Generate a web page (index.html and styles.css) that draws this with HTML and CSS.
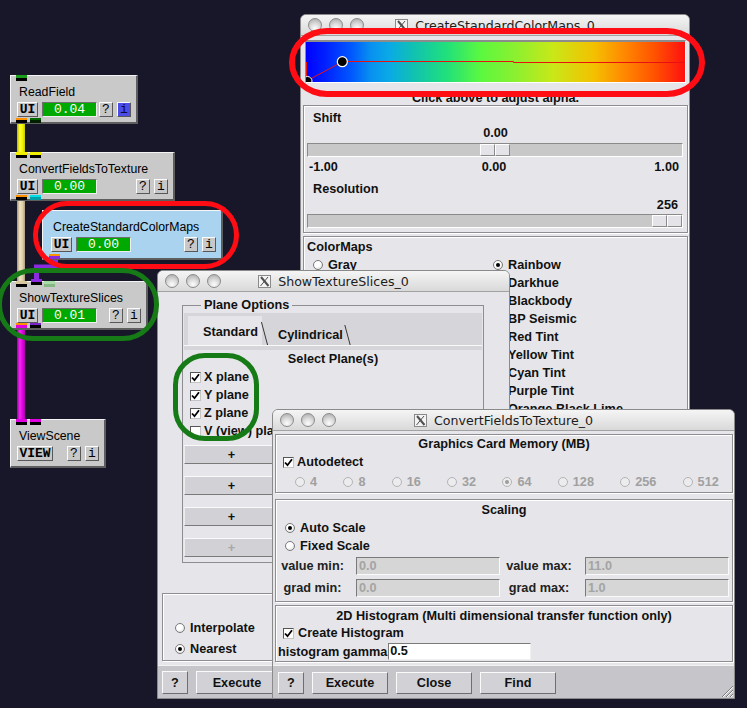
FILE: index.html
```html
<!DOCTYPE html>
<html>
<head>
<meta charset="utf-8">
<link rel="stylesheet" href="styles.css">
</head>
<body>
<div class="desk">

  <!-- network pipes -->
  <div class="pipe p-yellow"></div>
  <div class="pipe p-tan"></div>
  <div class="pipe p-mag"></div>
  <svg class="p-purple" width="70" height="40" viewBox="0 0 70 40"><path d="M55.5 6 V17 H36.5 V30" fill="none" stroke="#8a2be0" stroke-width="5" stroke-linejoin="miter"/></svg>

  <!-- network nodes -->
  <div class="node n-rf">
    <div class="n-title">ReadField</div>
    <div class="n-row"><span class="nb nb-ui">UI</span><span class="prog">0.04</span><span class="nb nb-q">?</span><span class="nb nb-i nb-blue">i</span></div>
  </div>
  <div class="node n-cft">
    <div class="n-title">ConvertFieldsToTexture</div>
    <div class="n-row"><span class="nb nb-ui">UI</span><span class="prog">0.00</span><span class="nb nb-q">?</span><span class="nb nb-i">i</span></div>
  </div>
  <div class="node n-cscm">
    <div class="n-title">CreateStandardColorMaps</div>
    <div class="n-row"><span class="nb nb-ui">UI</span><span class="prog">0.00</span><span class="nb nb-q">?</span><span class="nb nb-i">i</span></div>
  </div>
  <div class="node n-sts">
    <div class="n-title">ShowTextureSlices</div>
    <div class="n-row"><span class="nb nb-ui">UI</span><span class="prog">0.01</span><span class="nb nb-q">?</span><span class="nb nb-i">i</span></div>
  </div>
  <div class="node n-vs">
    <div class="n-title">ViewScene</div>
    <div class="n-row"><span class="nb nb-view">VIEW</span><span class="nb nb-q">?</span><span class="nb nb-i">i</span></div>
  </div>

  <!-- ports -->
  <span class="port pt-rf-in"></span>
  <span class="port out pt-rf-o1"></span>
  <span class="port out pt-rf-o2"></span>
  <span class="port pt-cft-i1"></span>
  <span class="port pt-cft-i2"></span>
  <span class="port out pt-cft-o1"></span>
  <span class="port out pt-cft-o2"></span>
  <span class="port out pt-cscm-o1"></span>
  <span class="port pt-sts-i1"></span>
  <span class="port pt-sts-i2"></span>
  <span class="port pt-sts-i3"></span>
  <span class="port out pt-sts-o1"></span>
  <span class="port out pt-sts-o2"></span>
  <span class="port pt-vs-i1"></span>
  <span class="port pt-vs-i2"></span>

  <!-- Window: CreateStandardColorMaps_0 -->
  <div class="win w-cm">
    <div class="tbar">
      <div class="lights"><span></span><span></span><span></span></div>
      <div class="ttl"><svg class="xicon" width="13" height="13" viewBox="0 0 13 13"><rect x="0.5" y="0.5" width="12" height="12" fill="#f4f4f4" stroke="#8a8a8a"/><path d="M3 2 L10.5 11" stroke="#505050" stroke-width="2"/><path d="M10 2 L2.5 11" stroke="#505050" stroke-width="1"/></svg><span>CreateStandardColorMaps_0</span></div>
      <div></div>
    </div>
    <div class="cm-body">
      <div class="cmap">
        <svg class="alpha" width="379" height="40" viewBox="0 0 379 40">
          <path d="M0.5 20 V40" stroke="#f01010" stroke-width="1"/>
          <path d="M1.5 38.5 L36 20" stroke="#f01010" stroke-width="1"/>
          <path d="M36 19.5 H207.5 V20.5 H379" stroke="#e81010" stroke-width="1" fill="none"/>
          <circle cx="1.5" cy="39" r="4.5" fill="#000" stroke="#fff" stroke-width="1"/>
          <circle cx="36.3" cy="19.7" r="5" fill="#000" stroke="#fff" stroke-width="1.2"/>
        </svg>
      </div>
      <div class="hint">Click above to adjust alpha.</div>
      <div class="frame f-shift">
        <div class="lbl l-shift">Shift</div>
        <div class="val val-c">0.00</div>
        <div class="trough t-c"><span class="thumb"><i></i><i></i></span></div>
        <div class="scale"><span>-1.00</span><span>0.00</span><span class="sr">1.00</span></div>
        <div class="lbl l-res">Resolution</div>
        <div class="val val-r">256</div>
        <div class="trough t-r"><span class="thumb"><i></i><i></i></span></div>
      </div>
      <div class="frame f-cmaps">
        <div class="lbl l-cm">ColorMaps</div>
        <div class="cm-cols">
          <div class="col">
            <div class="opt"><span class="rb"></span>Gray</div>
          </div>
          <div class="col">
            <div class="opt"><span class="rb on"></span>Rainbow</div>
            <div class="opt"><span class="rb"></span>Darkhue</div>
            <div class="opt"><span class="rb"></span>Blackbody</div>
            <div class="opt"><span class="rb"></span>BP Seismic</div>
            <div class="opt"><span class="rb"></span>Red Tint</div>
            <div class="opt"><span class="rb"></span>Yellow Tint</div>
            <div class="opt"><span class="rb"></span>Cyan Tint</div>
            <div class="opt"><span class="rb"></span>Purple Tint</div>
            <div class="opt"><span class="rb"></span>Orange Black Lime</div>
          </div>
        </div>
      </div>
    </div>
  </div>

  <!-- Window: ShowTextureSlices_0 -->
  <div class="win w-ts">
    <div class="tbar">
      <div class="lights"><span></span><span></span><span></span></div>
      <div class="ttl"><svg class="xicon" width="13" height="13" viewBox="0 0 13 13"><rect x="0.5" y="0.5" width="12" height="12" fill="#f4f4f4" stroke="#8a8a8a"/><path d="M3 2 L10.5 11" stroke="#505050" stroke-width="2"/><path d="M10 2 L2.5 11" stroke="#505050" stroke-width="1"/></svg><span>ShowTextureSlices_0</span></div>
      <div></div>
    </div>
    <div class="ts-body">
      <fieldset class="po">
        <legend>Plane Options</legend>
        <div class="tabstrip">
          <div class="tabs"><span class="tab tab-sel">Standard</span><span class="tab tab-2">Cylindrical</span></div>
        </div>
        <div class="sel-lbl">Select Plane(s)</div>
        <div class="cbrow first"><span class="cb"><svg width="9" height="9" viewBox="0 0 9 9"><path d="M1 4.5 L3.5 7.2 L8 1.2" fill="none" stroke="#000" stroke-width="1.8"/></svg></span>X plane</div>
        <div class="cbrow"><span class="cb"><svg width="9" height="9" viewBox="0 0 9 9"><path d="M1 4.5 L3.5 7.2 L8 1.2" fill="none" stroke="#000" stroke-width="1.8"/></svg></span>Y plane</div>
        <div class="cbrow"><span class="cb"><svg width="9" height="9" viewBox="0 0 9 9"><path d="M1 4.5 L3.5 7.2 L8 1.2" fill="none" stroke="#000" stroke-width="1.8"/></svg></span>Z plane</div>
        <div class="cbrow"><span class="cb"></span>V (view) plane</div>
        <div class="pbtns">
          <span class="pbtn">+</span>
          <span class="pbtn">+</span>
          <span class="pbtn">+</span>
          <span class="pbtn pbtn-dis">+</span>
        </div>
      </fieldset>
      <div class="frame f-interp">
        <div class="opt opt-i"><span class="rb"></span>Interpolate</div>
        <div class="opt opt-i"><span class="rb on"></span>Nearest</div>
      </div>
      <div class="bar bar-ts">
        <span class="btn btn-q">?</span>
        <span class="btn btn-ex2">Execute</span>
      </div>
    </div>
  </div>

  <!-- Window: ConvertFieldsToTexture_0 -->
  <div class="win w-cv">
    <div class="tbar">
      <div class="lights"><span></span><span></span><span></span></div>
      <div class="ttl"><svg class="xicon" width="13" height="13" viewBox="0 0 13 13"><rect x="0.5" y="0.5" width="12" height="12" fill="#f4f4f4" stroke="#8a8a8a"/><path d="M3 2 L10.5 11" stroke="#505050" stroke-width="2"/><path d="M10 2 L2.5 11" stroke="#505050" stroke-width="1"/></svg><span>ConvertFieldsToTexture_0</span></div>
      <div></div>
    </div>
    <div class="frame f-gcm">
      <div class="ftitle">Graphics Card Memory (MB)</div>
      <div class="cbline cbl-auto"><span class="cb"><svg width="9" height="9" viewBox="0 0 9 9"><path d="M1 4.5 L3.5 7.2 L8 1.2" fill="none" stroke="#000" stroke-width="1.8"/></svg></span>Autodetect</div>
      <div class="mem">
        <div class="opt"><span class="rb dis"></span>4</div>
        <div class="opt"><span class="rb dis"></span>8</div>
        <div class="opt"><span class="rb dis"></span>16</div>
        <div class="opt"><span class="rb dis"></span>32</div>
        <div class="opt"><span class="rb dis on"></span>64</div>
        <div class="opt"><span class="rb dis"></span>128</div>
        <div class="opt"><span class="rb dis"></span>256</div>
        <div class="opt"><span class="rb dis"></span>512</div>
      </div>
    </div>
    <div class="frame f-scal">
      <div class="ftitle">Scaling</div>
      <div class="opt opt-s first"><span class="rb on"></span>Auto Scale</div>
      <div class="opt opt-s"><span class="rb"></span>Fixed Scale</div>
      <div class="fgrid">
        <span class="fl">value min:</span><span class="fld fld-a">0.0</span>
        <span class="fl">value max:</span><span class="fld fld-b">11.0</span>
        <span class="fl">grad min:</span><span class="fld fld-a">0.0</span>
        <span class="fl">grad max:</span><span class="fld fld-b">1.0</span>
      </div>
    </div>
    <div class="frame f-hist">
      <div class="ftitle">2D Histogram (Multi dimensional transfer function only)</div>
      <div class="cbline cbl-hist"><span class="cb"><svg width="9" height="9" viewBox="0 0 9 9"><path d="M1 4.5 L3.5 7.2 L8 1.2" fill="none" stroke="#000" stroke-width="1.8"/></svg></span>Create Histogram</div>
      <div class="gamma"><span>histogram gamma</span><span class="gfld">0.5</span></div>
    </div>
    <div class="bar bar-cv">
      <span class="btn btn-q">?</span>
      <span class="btn btn-w">Execute</span>
      <span class="btn btn-w">Close</span>
      <span class="btn btn-w">Find</span>
      <svg class="grip" width="14" height="14" viewBox="0 0 14 14"><path d="M13 2 L2 13 M13 6 L6 13 M13 10 L10 13" stroke="#7a7a7a" stroke-width="1"/><path d="M13 3 L3 13 M13 7 L7 13 M13 11 L11 13" stroke="#fafafa" stroke-width="1"/></svg>
    </div>
  </div>

  <!-- annotation rings -->
  <div class="ring r-cmap"></div>
  <div class="ring r-node"></div>
  <div class="ring g-node"></div>
  <div class="ring g-cb"></div>
</div>
</body>
</html>
```

FILE: styles.css
```css
* { box-sizing: border-box; }
body { margin: 0; background: #171729; }
.desk {
  position: relative; width: 747px; height: 708px; overflow: hidden;
  background: #171729;
  font-family: "Liberation Sans", Arial, sans-serif;
}

/* ---------- pipes ---------- */
.pipe { position: absolute; width: 8px; }
.p-yellow { left: 17px; top: 123px; height: 30px; background: linear-gradient(to right, #b4b400, #ffff3a 35%, #f2f200 70%, #c4c400); }
.p-tan { left: 17px; top: 200px; height: 82px; background: linear-gradient(to right, #a39474, #f0e4c2 35%, #ded0aa 70%, #ac9c7c); }
.p-mag { left: 17px; top: 328px; height: 92px; background: linear-gradient(to right, #9c009c, #f22af2 35%, #e000e0 70%, #a400a4); }
.p-purple { position: absolute; left: 0; top: 250px; }

/* ---------- ports ---------- */
.port { position: absolute; width: 11px; height: 6px; background: linear-gradient(var(--c) 3px, var(--d, #000) 3px); }
.port.out { height: 5px; background: linear-gradient(var(--c) 2px, var(--d, #000) 2px); }
.pt-rf-in { left: 16px; top: 75px; --c: #1c9c1c; }
.pt-rf-o1 { left: 16px; top: 118px; --c: #ff9000; }
.pt-rf-o2 { left: 30px; top: 118px; --c: #006a00; --d: #002000; }
.pt-cft-i1 { left: 16px; top: 152px; --c: #f0f000; }
.pt-cft-i2 { left: 30px; top: 152px; --c: #f0f000; }
.pt-cft-o1 { left: 16px; top: 195px; --c: #ff9000; }
.pt-cft-o2 { left: 30px; top: 195px; --c: #00e0e8; --d: #00a0a8; }
.pt-cscm-o1 { left: 49px; top: 254px; --c: #ff9000; --d: #8a2be0; }
.pt-sts-i1 { left: 16px; top: 281px; --c: #d8c8a0; }
.pt-sts-i2 { left: 31px; top: 279px; --c: #8a2be0; }
.pt-sts-i3 { left: 44px; top: 281px; --c: #a8dca8; --d: #86b886; }
.pt-sts-o1 { left: 16px; top: 323px; --c: #ff9000; --d: #e000e0; }
.pt-sts-o2 { left: 30px; top: 323px; --c: #7a22cc; }
.pt-vs-i1 { left: 16px; top: 419px; --c: #e000e0; }
.pt-vs-i2 { left: 30px; top: 419px; --c: #e000e0; }

/* ---------- nodes ---------- */
.node {
  position: absolute; height: 49px;
  background: #c9c9c9;
  border-style: solid; border-width: 1px 2px 2px 1px;
  border-color: #f4f4f4 #5e5e5e #5e5e5e #f4f4f4;
  padding: 8px 5px 0 6px;
}
.n-rf { left: 10px; top: 75px; width: 128px; }
.n-cft { left: 10px; top: 152px; width: 165px; }
.n-cscm { left: 42px; top: 210px; width: 181px; height: 50px; padding-left: 8px; background: #a9d3ef; }
.n-sts { left: 10px; top: 281px; width: 138px; }
.n-vs { left: 10px; top: 419px; width: 96px; }
.n-title { height: 16px; line-height: 16px; margin-left: 2px; font-size: 12.3px; color: #000; white-space: nowrap; }
.n-row { display: flex; height: 15px; margin-top: 2px; }
.nb {
  height: 15px; display: flex; align-items: center; justify-content: center;
  background: #c8c8c8; border: 1px solid;
  border-color: #fbfbfb #585858 #585858 #fbfbfb;
  font: bold 13px "Liberation Mono", monospace; color: #000; line-height: 1;
}
.nb-ui { width: 21px; }
.nb-view { width: 36px; }
.nb-q { width: 14px; margin-left: auto; font-weight: normal; }
.nb-i { width: 14px; margin-left: 4px; font-weight: normal; }
.nb-blue { background: #4b4be8; color: #0a0a30; }
.prog {
  width: 55px; height: 15px; margin-left: 4px;
  background: #00a900; border: 1px solid;
  border-color: #707070 #efefef #efefef #707070;
  color: #fff; font: 13px "Liberation Mono", monospace;
  display: flex; align-items: center; justify-content: center;
}

/* ---------- windows ---------- */
.win {
  position: absolute; display: flex; flex-direction: column;
  background: #e6e6ea; border: 1px solid #8a8a8a; border-radius: 6px 6px 0 0;
  overflow: hidden; font: bold 12.7px "Liberation Sans", Arial, sans-serif; color: #111;
}
.w-cm { left: 300px; top: 14px; width: 390px; height: 440px; }
.w-ts { left: 157px; top: 270px; width: 353px; height: 429px; }
.w-cv { left: 272px; top: 409px; width: 463px; height: 290px; }

.tbar {
  flex: none; height: 21px; border-bottom: 1px solid #a2a2a2;
  background: linear-gradient(#f5f5f5, #d9d9d9);
  display: grid; grid-template-columns: 1fr auto 1fr; align-items: center;
}
.lights { display: flex; gap: 7px; padding-left: 7px; }
.lights span {
  width: 14px; height: 14px; border-radius: 50%; border: 1px solid #8c8c8c;
  background: radial-gradient(circle at 50% 78%, #fdfdfd 0, #dadada 45%, #a4a4a4 100%);
}
.ttl { display: flex; align-items: center; gap: 7px; font: 12.6px "DejaVu Sans", sans-serif; color: #1c1c1c; white-space: nowrap; }
.xicon { flex: none; }

/* generic frame */
.frame {
  flex: none; border: 1px solid #8e8e92;
  box-shadow: inset 1px 1px 0 #fff, 1px 1px 0 #fff;
}
.lbl, .val, .ftitle, .scale { height: 14px; line-height: 14px; white-space: nowrap; }

/* colormap window */
.cm-body { display: flex; flex-direction: column; padding: 4px 1px 0 2px; }
.cmap {
  position: relative; flex: none; height: 43px; margin: 0 2px 0 2px;
  border-top: 2px solid #8c8c8c; border-left: 1px solid #8c8c8c;
  border-bottom: 1px solid #fff; border-right: 1px solid #fff;
  background: linear-gradient(to right, #0000ff 0%, #0020ff 5%, #0058ff 12%, #0890f0 17%, #0aaae6 22%, #10c0b4 28%, #20e07c 37%, #5af840 46%, #8af030 55%, #c8e818 65%, #f4c000 76%, #ff8800 84%, #ff5200 92%, #ff1010 100%);
}
.alpha { position: absolute; left: 0; top: 0; }
.hint { flex: none; height: 12px; line-height: 12px; margin-top: 9px; text-align: center; white-space: nowrap; }
.f-shift { margin: 1px 0 0 0; width: 385px; height: 128px; }
.l-shift { margin-top: 5px; padding-left: 9px; }
.val-c { margin-top: 1px; text-align: center; }
.trough {
  height: 14px; margin: 3px 4px 0 3px; display: flex;
  background: #c8c8c8;
  border-style: solid; border-width: 1px; border-color: #8a8a8a #fff #fff #8a8a8a;
}
.t-c { justify-content: center; }
.t-r { justify-content: flex-end; margin-top: 2px; }
.thumb { display: flex; }
.thumb i { display: block; width: 15px; height: 12px; background: #e4e4e8; border: 1px solid; border-color: #fff #8a8a8a #8a8a8a #fff; }
.scale { margin-top: 3px; display: grid; grid-template-columns: 1fr auto 1fr; padding: 0 8px 0 5px; }
.scale .sr { text-align: right; }
.l-res { margin-top: 8px; padding-left: 9px; }
.val-r { margin-top: 2px; text-align: right; padding-right: 9px; }
.f-cmaps { margin-top: 3px; width: 385px; height: 200px; }
.l-cm { margin-top: 3px; padding-left: 3px; }
.cm-cols { display: grid; grid-template-columns: 180px 1fr; margin-top: 2px; padding-left: 9px; }

/* options */
.opt { display: flex; align-items: center; gap: 5px; height: 18px; white-space: nowrap; }
.rb {
  flex: none; width: 10px; height: 10px; border-radius: 50%;
  border: 1px solid #7a7a7a;
  background: radial-gradient(circle at 40% 35%, #fff 40%, #d2d2d2);
  display: flex; align-items: center; justify-content: center;
}
.rb.on::after { content: ""; width: 4px; height: 4px; border-radius: 50%; background: #000; }
.rb.dis { border-color: #b4b4b4; background: #ececee; }
.rb.dis.on::after { background: #9c9c9c; }
.cb {
  flex: none; width: 11px; height: 11px; background: #fff;
  border: 1px solid; border-color: #555 #c4c4c4 #c4c4c4 #555;
  display: flex; align-items: center; justify-content: center;
}

/* ShowTextureSlices window */
.ts-body { display: flex; flex-direction: column; }
.po {
  margin: 6px 0 0 24px; width: 302px; min-width: 0;
  border: 1px solid #8e8e92; padding: 1px 1px 5px 1px;
}
.po legend { margin-left: 17px; padding: 0 3px; height: 14px; line-height: 14px; }
.tabstrip { height: 37px; background: #d6d6da; }
.tabs { height: 33px; display: flex; align-items: flex-end; padding-left: 4px; border-bottom: 1px solid #f8f8f8; }
.tab { position: relative; display: flex; align-items: center; white-space: nowrap; }
.tab::after {
  content: ""; position: absolute; width: 0; border-right: 1px solid #383838;
  transform: skewX(15deg);
}
.tab-sel { width: 74px; height: 29px; padding: 2px 0 0 15px; background: #e6e6ea; }
.tab-sel::after { right: -3px; top: 6px; bottom: 0; }
.tab-2 { width: 80px; height: 21px; margin-left: 6px; padding: 1px 0 0 10px; }
.tab-2::after { right: 0; top: 1px; bottom: 0; }
.sel-lbl { margin-top: 2px; height: 14px; line-height: 14px; text-align: center; }
.cbrow { display: flex; align-items: center; gap: 3px; height: 18px; padding-left: 6px; white-space: nowrap; }
.cbrow.first { margin-top: 2px; }
.pbtns { display: flex; flex-direction: column; gap: 12px; margin-top: 5px; }
.pbtn {
  width: 94px; height: 19px; display: flex; align-items: center; justify-content: center;
  background: #d2d2d6; border-top: 1px solid #fafafa; border-bottom: 1px solid #7a7a7a;
  border-left: 1px solid #ececec;
}
.pbtn-dis { color: #a8a8a8; }
.f-interp { margin: 30px 0 0 4px; width: 345px; height: 68px; padding: 23px 0 0 12px; }
.opt-i { height: 21px; }

.bar {
  flex: none; position: relative; display: flex; gap: 8px;
  height: 33px; background: #c6c6ca; border-top: 1px solid #f2f2f2;
}
.bar-ts { margin-top: 4px; padding: 5px 0 0 4px; }
.bar-ts .btn { height: 23px; }
.bar-cv { margin-top: 3px; padding: 6px 0 0 5px; }
.btn {
  height: 22px; display: flex; align-items: center; justify-content: center;
  background: #d2d2d6; border: 1px solid; border-color: #fafafa #6e6e6e #6e6e6e #fafafa;
}
.btn-q { width: 26px; }
.btn-ex2 { width: 82px; }
.btn-w { width: 76px; }
.grip { position: absolute; right: 0; bottom: 0; }

/* ConvertFieldsToTexture window */
.f-gcm { margin: 3px 1px 0 2px; height: 59px; padding-top: 2px; }
.ftitle { text-align: center; }
.cbline { display: flex; align-items: center; height: 14px; padding-left: 7px; white-space: nowrap; }
.cbl-auto { margin-top: 4px; gap: 3px; }
.mem { display: flex; justify-content: space-around; height: 14px; margin-top: 6px; padding-left: 6px; color: #a0a0a0; }
.mem .opt { height: 14px; }
.f-scal { margin: 6px 1px 0 2px; height: 103px; padding-top: 3px; }
.opt-s { padding-left: 9px; }
.opt-s.first { margin-top: 2px; }
.fgrid { display: grid; grid-template-columns: 71px 152px 78px 151px; row-gap: 4px; margin-top: 2px; padding-left: 1px; }
.fl { text-align: center; height: 18px; line-height: 18px; color: #222; white-space: nowrap; }
.fld {
  width: 144px; height: 18px; line-height: 16px; padding-left: 2px;
  background: #d6d6d6; border: 1px solid; border-color: #7a7a7a #fafafa #fafafa #7a7a7a; color: #a4a4a4;
}
.fld-a { margin-left: 8px; }
.fld-b { margin-left: 7px; }
.f-hist { margin: 3px 1px 0 2px; height: 57px; padding-top: 3px; }
.cbl-hist { margin-top: 3px; gap: 4px; }
.gamma { display: flex; align-items: center; height: 17px; margin-top: 3px; padding-left: 2px; white-space: nowrap; }
.gfld {
  width: 143px; height: 17px; line-height: 15px; margin-left: 1px; padding-left: 1px;
  background: #fff; border: 1px solid; border-color: #7a7a7a #f0f0f0 #f0f0f0 #7a7a7a;
}

/* ---------- annotation rings ---------- */
.ring { position: absolute; border: 5px solid; }
.r-cmap { left: 289px; top: 28px; width: 416px; height: 69px; border-width: 6px; border-color: #ff0c14; border-radius: 38px / 34px; }
.r-node { left: 33px; top: 201px; width: 206px; height: 68px; border-color: #ff0c14; border-radius: 34px; }
.g-node { left: -3px; top: 268px; width: 162px; height: 73px; border-color: #167a16; border-radius: 36px; }
.g-cb { left: 173px; top: 353px; width: 86px; height: 88px; border-color: #167a16; border-radius: 32px; }
```
